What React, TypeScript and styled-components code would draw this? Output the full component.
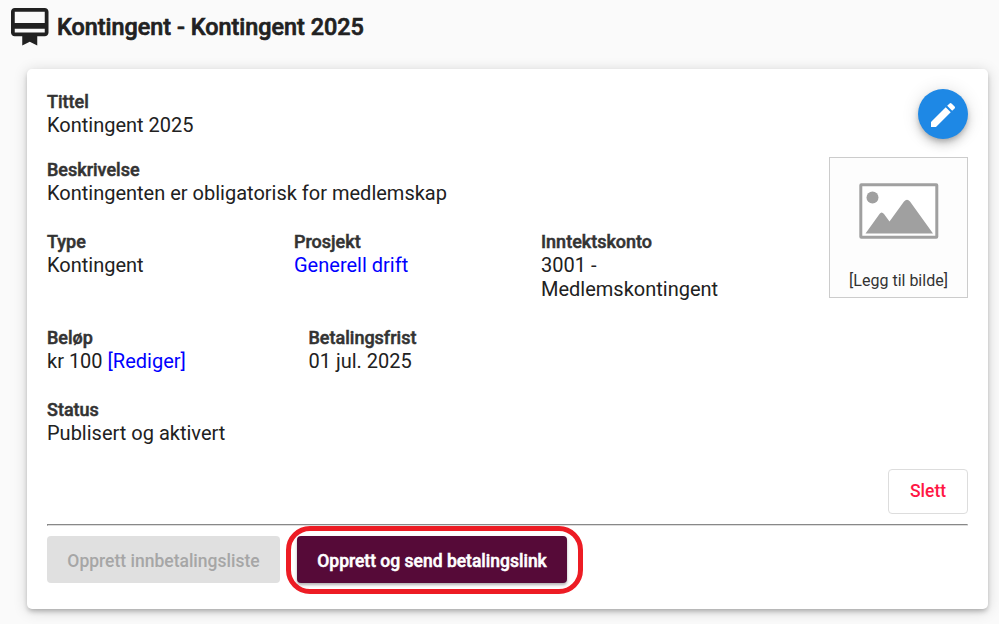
import React from "react";
import styled, { createGlobalStyle } from "styled-components";

const Global = createGlobalStyle`
  * { box-sizing: border-box; }
  body { margin: 0; background: #fafafa; font-family: Roboto, sans-serif; font-size: 20px; line-height: 24px; color: #212121; overflow: hidden; }
`;
const Page = styled.main`height: 624px; padding: 7px 11px 0 11px;`;
const Header = styled.header`
  display: flex; align-items: center; height: 40px; gap: 8.5px;
  svg { width: 37.5px; height: 37.5px; flex: none; }
`;
const Heading = styled.h1`margin: 0; font-size: 23.4px; line-height: 28px; font-weight: 500; -webkit-text-stroke: .65px currentColor; white-space: nowrap;`;
const Card = styled.section`
  margin: 22px 0 0 16px; width: 961px; height: 540px; padding: 20px 20px 0; background: #fff; border-radius: 5px;
  box-shadow: 0 3px 5px -1px rgba(0,0,0,.25), 0 2px 14px rgba(0,0,0,.17);
  display: flex; flex-direction: column;
`;
const Body = styled.div`display: flex; justify-content: space-between; height: 380px;`;
const Details = styled.div`width: 741px;`;
const Row = styled.div<{ $cols?: string; $gap: number }>`
  display: grid; grid-template-columns: ${p => p.$cols ?? "1fr"}; margin-bottom: ${p => p.$gap}px;
`;
const Label = styled.div`font-size: 18px; line-height: 24px; padding-top: 1px; height: 24px; font-weight: 500; -webkit-text-stroke: .5px currentColor; color: #333;`;
const Value = styled.div`line-height: 24px;`;
const Link = styled.a`color: #00f; text-decoration: none;`;
const Side = styled.aside`display: flex; flex-direction: column; align-items: flex-end;`;
const EditButton = styled.button`
  width: 50px; height: 50px; border: 0; padding: 2px 0 0; border-radius: 50%; background: #1e88e5; display: grid; place-items: center;
  box-shadow: 0 3px 5px -1px rgba(0,0,0,.2), 0 6px 10px rgba(0,0,0,.14), 0 1px 18px rgba(0,0,0,.12);
  svg { width: 32px; height: 32px; }
`;
const ImageBox = styled.div`
  margin-top: 18px; width: 139px; height: 141px; border: 1px solid #ccc; background: #fdfdfd; display: flex; flex-direction: column; align-items: center; padding-top: 24px;
  font-size: 16px; line-height: 20px; color: #333;
  svg { width: 80px; height: 58px; margin-bottom: 31px; flex: none; }
`;
const Button = styled.button`font-family: inherit; font-size: 17.5px; line-height: 24px; padding: 2px 0 0; border-radius: 4px; border: 0; font-weight: 500; white-space: nowrap;`;
const DeleteButton = styled(Button)`align-self: flex-end; width: 80px; height: 45px; padding: 0 0 2px; background: #fff; border: 1px solid #ddd; color: #ff1744;`;
const Rule = styled.hr`width: 100%; height: 2px; border: 1px solid; border-color: #888 #ddd #ddd #888; margin: 10px 0 0;`;
const Actions = styled.div`display: flex; gap: 6px;`;
const Disabled = styled(Button)`width: 233px; height: 47px; margin-top: 10px; background: #e0e0e0; color: #a6a6a6;`;
const Highlight = styled.div`width: 297px; height: 68px; border: 5px solid #ed1c24; border-radius: 24px; padding: 5px 6px;`;
const Primary = styled(Button)`width: 270px; height: 47px; background: #560a38; color: #fff; -webkit-text-stroke: .5px currentColor; box-shadow: 0 2px 3px rgba(0,0,0,.3);`;

type FieldProps = { label: string; children: React.ReactNode };
const Field = ({ label, children }: FieldProps) => <div><Label>{label}</Label><Value>{children}</Value></div>;

export default function App() {
  return <>
    <Global />
    <Page>
      <Header>
        <svg viewBox="2 2 20 20" fill="#212121"><path d="M20 2H4c-1.11 0-2 .89-2 2v11c0 1.11.89 2 2 2h4v5l4-2 4 2v-5h4c1.11 0 2-.89 2-2V4c0-1.11-.89-2-2-2zm0 13H4v-2h16v2zm0-5H4V4h16v6z" /></svg>
        <Heading>Kontingent - Kontingent 2025</Heading>
      </Header>
      <Card>
        <Body>
          <Details>
            <Row $gap={20}><Field label="Tittel">Kontingent 2025</Field></Row>
            <Row $gap={24}><Field label="Beskrivelse">Kontingenten er obligatorisk for medlemskap</Field></Row>
            <Row $cols="247px 247px 190px" $gap={24}>
              <Field label="Type">Kontingent</Field>
              <Field label="Prosjekt"><Link>Generell drift</Link></Field>
              <Field label="Inntektskonto">3001 - Medlemskontingent</Field>
            </Row>
            <Row $cols="261.5px 1fr" $gap={24}>
              <Field label="Beløp">kr 100 <Link>[Rediger]</Link></Field>
              <Field label="Betalingsfrist">01 jul. 2025</Field>
            </Row>
            <Row $gap={0}><Field label="Status">Publisert og aktivert</Field></Row>
          </Details>
          <Side>
            <EditButton aria-label="Rediger"><svg viewBox="0 0 24 24" fill="#fff"><path d="M3 17.25V21h3.75L17.81 9.94l-3.75-3.75L3 17.25zM20.71 7.04a1 1 0 0 0 0-1.41l-2.34-2.34a1 1 0 0 0-1.41 0l-1.83 1.83 3.75 3.75 1.83-1.83z" /></svg></EditButton>
            <ImageBox>
              <svg viewBox="0 0 80 58"><rect x="1.8" y="2.8" width="76" height="52.4" rx=".5" fill="#fff" stroke="#a0a0a0" strokeWidth="3" /><circle cx="13.500" cy="15.500" r="6" fill="#a0a0a0" /><path d="M6.500 51.500 20.500 32Q22.500 29 25 32L30.500 39.500 45 19.500Q48 16 51 19.500L74 51.500z" fill="#a0a0a0" /></svg>
              [Legg til bilde]
            </ImageBox>
          </Side>
        </Body>
        <DeleteButton>Slett</DeleteButton>
        <Rule />
        <Actions>
          <Disabled disabled>Opprett innbetalingsliste</Disabled>
          <Highlight><Primary>Opprett og send betalingslink</Primary></Highlight>
        </Actions>
      </Card>
    </Page>
  </>;
}
